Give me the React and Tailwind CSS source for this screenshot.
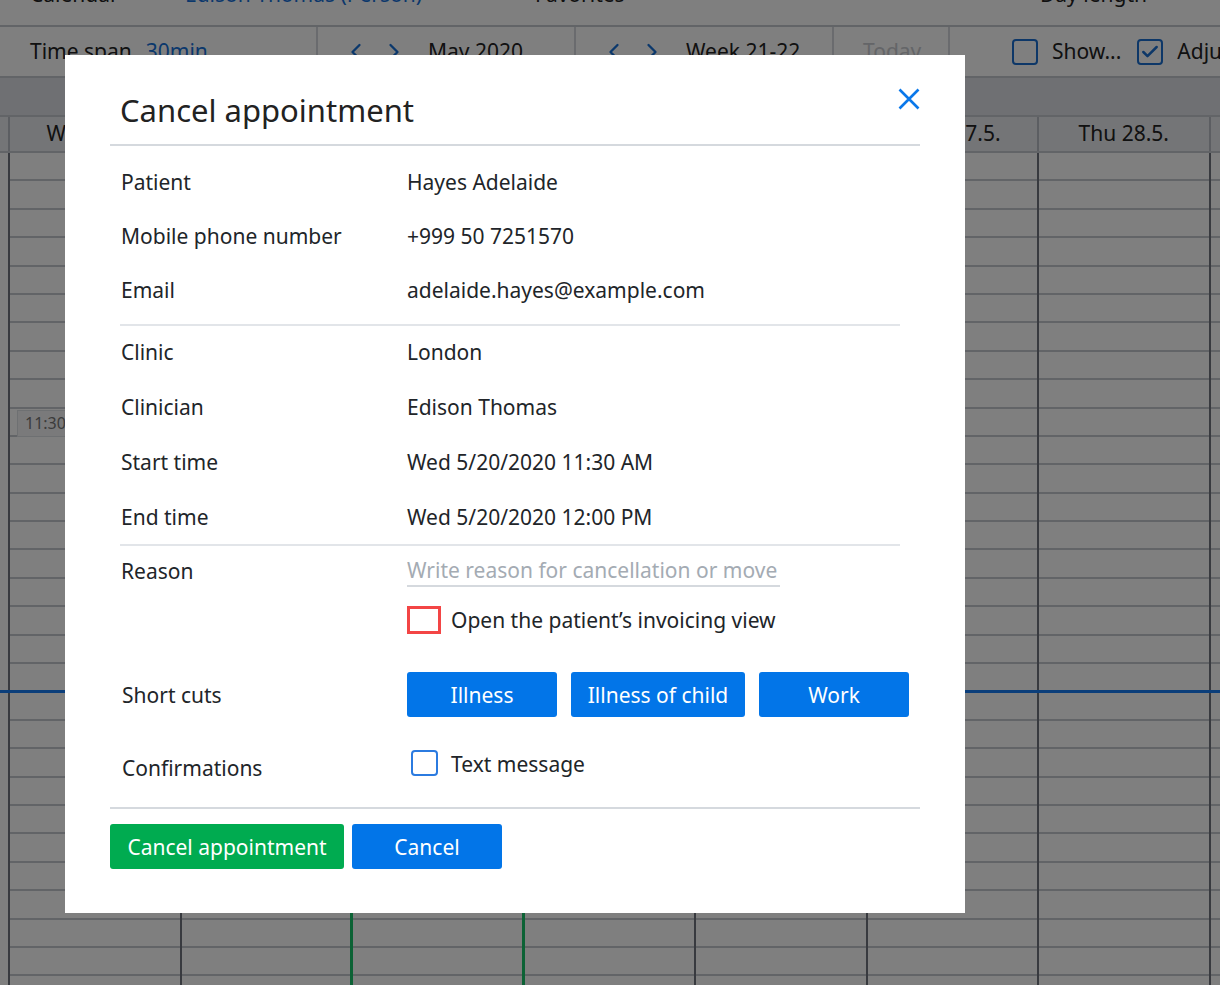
// Cancel appointment dialog shown over the week calendar
import { ChevronLeft, ChevronRight, Check } from 'lucide-react'

const FONT = { fontFamily: '"Noto Sans", "Open Sans", Arial, sans-serif' }

const DAYS = ['Wed 20.5.', 'Thu 21.5.', 'Fri 22.5.', 'Mon 25.5.', 'Tue 26.5.', 'Wed 27.5.', 'Thu 28.5.', 'Fri 29.5.']
const ROWS = Array.from({ length: 30 }, (_, i) => i)

// ── Calendar behind the dialog ────────────────────────────────────────────────
function Calendar() {
  return (
    <div className="flex flex-col w-[1220px] h-[985px] bg-white text-[#222] text-[21px]">
      {/* Top bar (mostly off-screen) */}
      <div className="h-[27px] shrink-0 flex items-start border-b-2 border-[#c4c8ce] overflow-hidden whitespace-nowrap">
        <span className="-mt-[21px] ml-[30px] w-[155px] shrink-0">Calendar</span>
        <span className="-mt-[21px] w-[350px] shrink-0 text-[#1670d8]">Edison Thomas (Person)</span>
        <span className="-mt-[21px] w-[505px] shrink-0">Favorites</span>
        <span className="-mt-[21px]">Day length</span>
      </div>

      {/* Toolbar */}
      <div className="h-[51px] shrink-0 flex items-stretch border-b-2 border-[#c4c8ce] whitespace-nowrap overflow-hidden">
        <div className="w-[318px] shrink-0 flex items-center pl-[30px] gap-[14px] border-r-2 border-[#d4d7dc]">
          <span>Time span</span>
          <span className="text-[#1670d8]">30min</span>
        </div>
        <div className="w-[258px] shrink-0 flex items-center pl-[24px] gap-[10px] border-r-2 border-[#d4d7dc]">
          <ChevronLeft className="w-[28px] h-[28px] text-[#1670d8]" />
          <ChevronRight className="w-[28px] h-[28px] text-[#1670d8]" />
          <span className="ml-[10px]">May 2020</span>
        </div>
        <div className="w-[258px] shrink-0 flex items-center pl-[24px] gap-[10px] border-r-2 border-[#d4d7dc]">
          <ChevronLeft className="w-[28px] h-[28px] text-[#1670d8]" />
          <ChevronRight className="w-[28px] h-[28px] text-[#1670d8]" />
          <span className="ml-[10px]">Week 21-22</span>
        </div>
        <div className="w-[116px] shrink-0 flex items-center pl-[29px] border-r-2 border-[#d4d7dc] text-[#c8cbd0]">Today</div>
        <div className="flex items-center pl-[62px] gap-[14px] shrink-0">
          <span className="w-[26px] h-[26px] rounded-[4px] border-2 border-[#1a6fd0]" />
          <span className="mr-[2px]">Show...</span>
          <span className="w-[26px] h-[26px] rounded-[4px] border-2 border-[#1a6fd0] flex items-center justify-center">
            <Check className="w-[20px] h-[20px] text-[#1a6fd0]" strokeWidth={3} />
          </span>
          <span>Adjust</span>
        </div>
      </div>

      {/* Band */}
      <div className="h-[37px] shrink-0 bg-[#dfe1e6]" />

      {/* Day headers */}
      <div className="h-[38px] shrink-0 flex bg-[#e8eaee] border-b-2 border-[#c4c8ce] border-t-2">
        <div className="w-[10px] shrink-0 border-r-2 border-[#b8bdc5]" />
        {DAYS.map((d) => (
          <div key={d} className="w-[171.5px] shrink-0 flex items-center justify-center border-r-2 border-[#b8bdc5] whitespace-nowrap">
            {d}
          </div>
        ))}
      </div>

      {/* Grid */}
      <div className="relative flex-1 flex overflow-hidden">
        <div className="w-[10px] shrink-0 border-r-2 border-[#70757e]" />
        {DAYS.map((d, ci) => (
          <div
            key={d}
            className={`w-[171.5px] shrink-0 flex flex-col ${ci === 1 || ci === 2 ? 'border-r-[3px] border-[#18c46a]' : 'border-r-2 border-[#70757e]'}`}
          >
            {ROWS.map((r) => (
              <div key={r} className="h-[28.4px] shrink-0 border-b-2 border-[#c4c8ce]" />
            ))}
          </div>
        ))}
        {/* 11:30 marker */}
        <div className="absolute left-[17px] top-[257px] w-[50px] h-[27px] border border-[#dde0e5] bg-[#f4f5f7] text-[16px] text-[#777] leading-[25px] pl-[7px]">
          11:30
        </div>
        {/* current time line */}
        <div className="absolute left-0 right-0 top-[537px] h-[3px] bg-[#167cf4]" />
      </div>
    </div>
  )
}

// ── Dialog pieces ─────────────────────────────────────────────────────────────
function InfoRow({ label, value, h = 'h-[54px]' }) {
  return (
    <div className={`${h} flex items-center`}>
      <span className="w-[287px] pl-[1px]">{label}</span>
      <span>{value}</span>
    </div>
  )
}

function BlueButton({ children, width }) {
  return (
    <button className={`${width} h-[45px] rounded-[3px] bg-[#0275e8] text-white text-[21px]`}>{children}</button>
  )
}

function CancelDialog() {
  return (
    <div className="absolute left-[65px] top-[55px] w-[900px] h-[858px] bg-white px-[45px] pt-[24px] text-[#212529] text-[21px] leading-[30px]">
      {/* Header */}
      <div className="h-[67px] flex items-center justify-between border-b-2 border-[#d5d9de]">
        <h2 className="pl-[10px] -mt-[3px] text-[31px] text-[#222] font-normal leading-[40px]">Cancel appointment</h2>
        <svg viewBox="0 0 22 22" className="w-[22px] h-[22px] self-start mt-[9px]" fill="none" stroke="#0a78ea" strokeWidth="2.6">
          <path d="M1.5 1.5 L20.5 20.5 M20.5 1.5 L1.5 20.5" />
        </svg>
      </div>

      {/* Patient info */}
      <div className="ml-[10px] w-[780px] pt-[9px] pb-[7px] border-b-2 border-[#e2e5e9]">
        <InfoRow label="Patient" value="Hayes Adelaide" />
        <InfoRow label="Mobile phone number" value="+999 50 7251570" />
        <InfoRow label="Email" value="adelaide.hayes@example.com" />
      </div>

      {/* Appointment info */}
      <div className="ml-[10px] w-[780px] -mt-[2px] border-b-2 border-[#e2e5e9]">
        <InfoRow label="Clinic" value="London" h="h-[55px]" />
        <InfoRow label="Clinician" value="Edison Thomas" h="h-[55px]" />
        <InfoRow label="Start time" value="Wed 5/20/2020 11:30 AM" h="h-[55px]" />
        <InfoRow label="End time" value="Wed 5/20/2020 12:00 PM" h="h-[55px]" />
      </div>

      {/* Reason */}
      <div className="ml-[10px] flex pt-[9px]">
        <span className="w-[287px] pl-[1px] pt-[1px]">Reason</span>
        <div className="flex flex-col">
          <input
            readOnly
            placeholder="Write reason for cancellation or move"
            className="w-[373px] h-[32px] text-[21px] border-b-2 border-[#d5d9de] outline-none placeholder:text-[#a4abb3]"
            style={FONT}
          />
          <label className="mt-[18px] h-[30px] flex items-center gap-[10px]">
            <span className="w-[34px] h-[28px] border-[3px] border-[#f34545] bg-white" />
            <span>Open the patient’s invoicing view</span>
          </label>
        </div>
      </div>

      {/* Short cuts */}
      <div className="ml-[10px] mt-[37px] flex items-center">
        <span className="w-[287px] pl-[2px]">Short cuts</span>
        <div className="flex gap-[14px]">
          <BlueButton width="w-[150px]">Illness</BlueButton>
          <BlueButton width="w-[174px]">Illness of child</BlueButton>
          <BlueButton width="w-[150px]">Work</BlueButton>
        </div>
      </div>

      {/* Confirmations */}
      <div className="ml-[10px] mt-[32px] h-[44px] flex items-start">
        <span className="w-[287px] pl-[2px] pt-[4px]">Confirmations</span>
        <label className="flex items-start gap-[13px] pl-[4px]">
          <span className="mt-[1px] w-[27px] h-[26px] rounded-[4px] border-2 border-[#2b7be0]" />
          <span>Text message</span>
        </label>
      </div>

      {/* Footer */}
      <div className="mt-[14px] pt-[15px] border-t-2 border-[#d5d9de] flex gap-[8px]">
        <button className="w-[234px] h-[45px] rounded-[3px] bg-[#00ab50] text-white text-[21px]">Cancel appointment</button>
        <BlueButton width="w-[150px]">Cancel</BlueButton>
      </div>
    </div>
  )
}

export default function App() {
  return (
    <div className="relative w-[1220px] h-[985px] overflow-hidden" style={FONT}>
      <Calendar />
      <div className="absolute inset-0 bg-black/50" />
      <CancelDialog />
    </div>
  )
}
